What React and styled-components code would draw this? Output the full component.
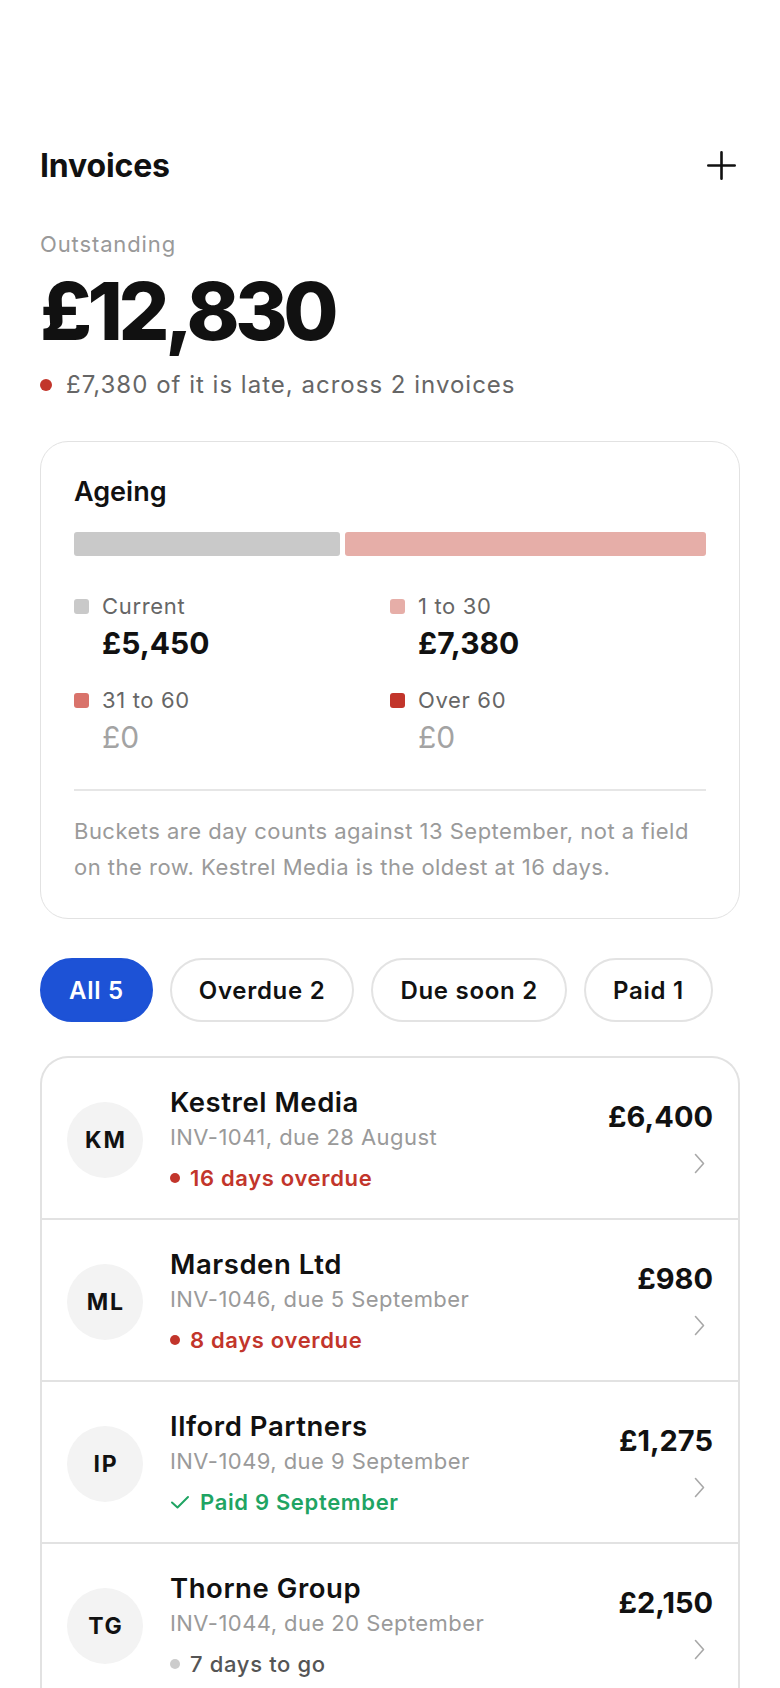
import React from "react";
import styled, { createGlobalStyle } from "styled-components";

const GlobalStyle = createGlobalStyle`
  * { box-sizing: border-box; }
  body {
    margin: 0;
    background: #ffffff;
    font-family: "Inter", "Liberation Sans", sans-serif;
    color: #111111;
  }
`;

const buckets = [
  { label: "Current", amount: "£5,450", value: 5450, color: "#c9c9c9" },
  { label: "1 to 30", amount: "£7,380", value: 7380, color: "#e6aea8" },
  { label: "31 to 60", amount: "£0", value: 0, color: "#d9736b" },
  { label: "Over 60", amount: "£0", value: 0, color: "#c2352b" },
];

const filters = [
  { label: "All 5", active: true },
  { label: "Overdue 2" },
  { label: "Due soon 2" },
  { label: "Paid 1" },
];

const invoices = [
  {
    initials: "KM",
    name: "Kestrel Media",
    meta: "INV-1041, due 28 August",
    amount: "£6,400",
    status: "16 days overdue",
    tone: "late",
  },
  {
    initials: "ML",
    name: "Marsden Ltd",
    meta: "INV-1046, due 5 September",
    amount: "£980",
    status: "8 days overdue",
    tone: "late",
  },
  {
    initials: "IP",
    name: "Ilford Partners",
    meta: "INV-1049, due 9 September",
    amount: "£1,275",
    status: "Paid 9 September",
    tone: "paid",
  },
  {
    initials: "TG",
    name: "Thorne Group",
    meta: "INV-1044, due 20 September",
    amount: "£2,150",
    status: "7 days to go",
    tone: "soon",
  },
];

const toneColor = {
  late: "#c2352b",
  paid: "#1fa463",
  soon: "#555555",
};

const Page = styled.div`
  padding: 145px 40px 0;
  height: 1688px;
  overflow: hidden;
`;

const Header = styled.header`
  display: flex;
  align-items: center;
  justify-content: space-between;
  height: 40px;
`;

const Title = styled.h1`
  margin: 0;
  font-size: 32px;
  font-weight: 700;
  letter-spacing: -0.005em;
`;

const AddButton = styled.button`
  width: 40px;
  height: 40px;
  margin-right: 4px;
  padding: 0;
  border: none;
  background: none;
  color: #111;
  display: flex;
  align-items: center;
  justify-content: flex-end;
  cursor: pointer;
`;

const Summary = styled.section`
  margin-top: 45px;
`;

const Eyebrow = styled.div`
  font-size: 22px;
  line-height: 28px;
  letter-spacing: 0.04em;
  color: #999999;
`;

const Total = styled.div`
  margin-top: 13px;
  font-size: 80px;
  line-height: 80px;
  font-weight: 800;
  letter-spacing: -0.055em;
`;

const LateNote = styled.div`
  margin-top: 19px;
  display: flex;
  align-items: center;
  gap: 14px;
  font-size: 24px;
  line-height: 30px;
  letter-spacing: 0.042em;
  color: #666666;
`;

const Dot = styled.span`
  width: ${(p) => p.$size || 10}px;
  height: ${(p) => p.$size || 10}px;
  border-radius: 50%;
  background: ${(p) => p.$color};
  flex-shrink: 0;
`;

const Card = styled.section`
  margin-top: 41px;
  border: 1px solid #e2e2e2;
  border-radius: 28px;
  padding: 34px 33px 33px;
`;

const CardTitle = styled.h2`
  margin: 0;
  font-size: 27px;
  line-height: 32px;
  font-weight: 600;
`;

const Bar = styled.div`
  margin-top: 24px;
  display: flex;
  gap: 5px;
  height: 24px;
`;

const Segment = styled.div`
  background: ${(p) => p.$color};
  border-radius: 3px;
`;

const Legend = styled.div`
  margin-top: 36px;
  display: grid;
  grid-template-columns: 1fr 1fr;
  row-gap: 26px;
`;

const LegendItem = styled.div`
  display: grid;
  grid-template-columns: 15px 1fr;
  column-gap: 13px;
  align-items: center;
`;

const Swatch = styled.span`
  width: 15px;
  height: 15px;
  border-radius: 3px;
  background: ${(p) => p.$color};
`;

const LegendLabel = styled.span`
  font-size: 22px;
  line-height: 28px;
  letter-spacing: 0.03em;
  color: #666666;
`;

const LegendAmount = styled.span`
  grid-column: 2;
  margin-top: 6px;
  font-size: 30px;
  line-height: 34px;
  font-weight: ${(p) => (p.$empty ? 400 : 700)};
  color: ${(p) => (p.$empty ? "#a3a3a3" : "#111111")};
`;

const Divider = styled.hr`
  margin: 35px 0 0;
  border: none;
  border-top: 2px solid #e6e6e6;
`;

const Footnote = styled.p`
  margin: 22px 0 0;
  font-size: 22px;
  line-height: 36px;
  letter-spacing: 0.022em;
  color: #9a9a9a;
`;

const Filters = styled.nav`
  margin-top: 39px;
  display: flex;
  gap: 17px;
`;

const Chip = styled.button`
  height: 64px;
  padding: 0 27px;
  border-radius: 32px;
  border: 2px solid ${(p) => (p.$active ? "#1d52d6" : "#e3e3e3")};
  background: ${(p) => (p.$active ? "#1d52d6" : "#ffffff")};
  color: ${(p) => (p.$active ? "#ffffff" : "#111111")};
  font-family: inherit;
  font-size: 24px;
  font-weight: 600;
  letter-spacing: 0.03em;
  cursor: pointer;
`;

const List = styled.ul`
  margin: 34px 0 0;
  padding: 0;
  list-style: none;
  border: 2px solid #e2e2e2;
  border-bottom: none;
  border-radius: 28px 28px 0 0;
`;

const Row = styled.li`
  display: flex;
  align-items: center;
  gap: 27px;
  padding: 27px 25px 24px 25px;
  & + & {
    border-top: 2px solid #e2e2e2;
  }
`;

const Avatar = styled.div`
  width: 76px;
  height: 76px;
  border-radius: 50%;
  background: #f3f3f3;
  display: flex;
  align-items: center;
  justify-content: center;
  font-size: 23px;
  font-weight: 700;
  letter-spacing: 0.08em;
  text-indent: 0.08em;
  flex-shrink: 0;
`;

const Info = styled.div`
  flex: 1;
  min-width: 0;
`;

const Name = styled.div`
  font-size: 27.5px;
  line-height: 34px;
  font-weight: 600;
  letter-spacing: 0.02em;
`;

const Meta = styled.div`
  margin-top: 2px;
  font-size: 22px;
  line-height: 32px;
  letter-spacing: 0.02em;
  color: #9a9a9a;
`;

const Status = styled.div`
  margin-top: 9px;
  display: flex;
  align-items: center;
  gap: 10px;
  font-size: 22px;
  line-height: 32px;
  letter-spacing: 0.03em;
  font-weight: ${(p) => (p.$tone === "soon" ? 500 : 600)};
  color: ${(p) => toneColor[p.$tone]};
`;

const Side = styled.div`
  display: flex;
  flex-direction: column;
  align-items: flex-end;
  gap: 18px;
  margin-bottom: 6px;
`;

const Amount = styled.div`
  font-size: 29px;
  line-height: 36px;
  font-weight: 700;
`;

const Chevron = styled.svg`
  margin-right: 8px;
`;

const PlusIcon = () => (
  <svg width="29" height="29" viewBox="0 0 29 29" fill="none">
    <path d="M14.5 1.3v26.4M1.3 14.5h26.4" stroke="currentColor" strokeWidth="2.6" strokeLinecap="round" />
  </svg>
);

const CheckIcon = () => (
  <svg width="20" height="16" viewBox="0 0 20 16" fill="none">
    <path d="M2 8.5l5.5 5L18 3" stroke="currentColor" strokeWidth="2" strokeLinecap="round" strokeLinejoin="round" />
  </svg>
);

const StatusMark = ({ tone }) => {
  if (tone === "paid") return <CheckIcon />;
  return <Dot $size={10} $color={tone === "late" ? "#c2352b" : "#cccccc"} />;
};

export default function App() {
  const total = buckets.reduce((s, b) => s + b.value, 0);
  return (
    <>
      <GlobalStyle />
      <Page>
        <Header>
          <Title>Invoices</Title>
          <AddButton aria-label="New invoice">
            <PlusIcon />
          </AddButton>
        </Header>

        <Summary>
          <Eyebrow>Outstanding</Eyebrow>
          <Total>£12,830</Total>
          <LateNote>
            <Dot $size={12} $color="#c2352b" />
            £7,380 of it is late, across 2 invoices
          </LateNote>
        </Summary>

        <Card>
          <CardTitle>Ageing</CardTitle>
          <Bar>
            {buckets
              .filter((b) => b.value > 0)
              .map((b) => (
                <Segment key={b.label} $color={b.color} style={{ flex: b.value / total }} />
              ))}
          </Bar>
          <Legend>
            {buckets.map((b) => (
              <LegendItem key={b.label}>
                <Swatch $color={b.color} />
                <LegendLabel>{b.label}</LegendLabel>
                <LegendAmount $empty={b.value === 0}>{b.amount}</LegendAmount>
              </LegendItem>
            ))}
          </Legend>
          <Divider />
          <Footnote>
            Buckets are day counts against 13 September, not a field on the row. Kestrel Media
            is the oldest at 16 days.
          </Footnote>
        </Card>

        <Filters>
          {filters.map((f) => (
            <Chip key={f.label} $active={f.active}>
              {f.label}
            </Chip>
          ))}
        </Filters>

        <List>
          {invoices.map((inv) => (
            <Row key={inv.initials}>
              <Avatar>{inv.initials}</Avatar>
              <Info>
                <Name>{inv.name}</Name>
                <Meta>{inv.meta}</Meta>
                <Status $tone={inv.tone}>
                  <StatusMark tone={inv.tone} />
                  {inv.status}
                </Status>
              </Info>
              <Side>
                <Amount>{inv.amount}</Amount>
                <Chevron width="11" height="21" viewBox="0 0 11 21" fill="none">
                  <path d="M1.5 1.5l8 9-8 9" stroke="#a8a8a8" strokeWidth="1.6" strokeLinecap="round" strokeLinejoin="round" />
                </Chevron>
              </Side>
            </Row>
          ))}
        </List>
      </Page>
    </>
  );
}
